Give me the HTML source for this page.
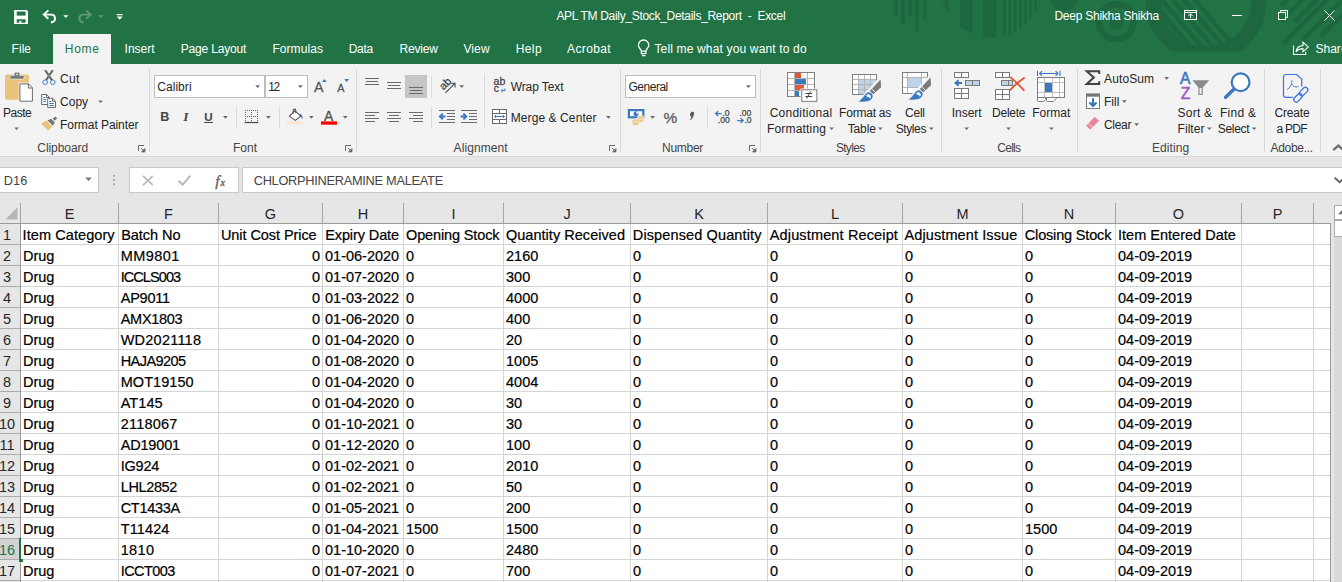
<!DOCTYPE html><html><head><meta charset="utf-8"><title>Excel</title><style>
*{box-sizing:border-box;margin:0;padding:0}
html,body{width:1342px;height:582px;overflow:hidden;background:#e6e6e6;font-family:"Liberation Sans",sans-serif;}
.a{position:absolute}
.t{position:absolute;white-space:pre;line-height:1;}
#title{left:0;top:0;width:1342px;height:64px;background:#217346}
.wt{color:#fff;font-size:12px}
#ribbon{left:0;top:63px;width:1342px;height:94px;background:#f3f3f3;border-bottom:1px solid #d2d2d2}
.rt{color:#262626;font-size:12px}
.gl{color:#444;font-size:12px}
.sep{position:absolute;width:1px;background:#d8d8d8;top:71px;height:82px}
#grid{left:0;top:203px;width:1342px;height:379px;}
.c{position:absolute;white-space:pre;font-size:14.5px;line-height:21px;color:#000;height:21px;-webkit-text-stroke:0.2px #000;}
.hc{position:absolute;white-space:pre;font-size:14.5px;line-height:20px;color:#262626;text-align:center;top:204px;height:20px}
.rn{position:absolute;white-space:pre;font-size:14.5px;line-height:21px;color:#262626;left:-3px;width:20px;text-align:center;}
</style></head><body><div id="root" class="a" style="left:0;top:0;width:1342px;height:582px;overflow:hidden">
<div id="title" class="a">
<svg class="a" style="left:0;top:0" width="1342" height="64">
<defs>
<clipPath id="cA"><circle cx="991.5" cy="-13" r="50.5"/></clipPath>
<clipPath id="cB"><circle cx="1206" cy="1.4" r="45.5"/></clipPath>
<clipPath id="cC"><rect x="1100" y="0" width="242" height="51.6"/></clipPath>
</defs>
<rect x="893.7" y="0" width="3.8" height="16.0" fill="#1d6640"/>
<rect x="901.0" y="0" width="4.0" height="23.5" fill="#1d6640"/>
<rect x="908.3" y="0" width="3.9" height="16.0" fill="#1d6640"/>
<rect x="915.0" y="0" width="4.0" height="32.0" fill="#1d6640"/>
<rect x="923.0" y="0" width="3.8" height="20.5" fill="#1d6640"/>
<g clip-path="url(#cA)" fill="#1d6640">
<rect x="940.0" y="0" width="8.5" height="40"/>
<rect x="959.7" y="0" width="12.8" height="40"/>
<rect x="982.8" y="0" width="13.7" height="40"/>
<rect x="1003.0" y="0" width="3.0" height="40"/>
<rect x="1008.5" y="0" width="2.7" height="40"/>
<rect x="1014.0" y="0" width="2.4" height="40"/>
<rect x="1019.1" y="0" width="2.4" height="40"/>
<rect x="1024.2" y="0" width="2.4" height="40"/>
<rect x="1029.3" y="0" width="2.4" height="40"/>
<rect x="1034.4" y="0" width="2.4" height="40"/>
<rect x="1039.5" y="0" width="2.4" height="40"/>
</g>
<circle cx="1064" cy="-3" r="13.8" fill="#1d6640"/>
<circle cx="1116.3" cy="21.6" r="17.4" fill="none" stroke="#1d6640" stroke-width="6.4"/>
<circle cx="1116.3" cy="23" r="7.2" fill="#1d6640"/>
<g clip-path="url(#cC)">
<circle cx="1206" cy="1.4" r="52.8" fill="none" stroke="#1d6640" stroke-width="15.4"/>
<g clip-path="url(#cB)" fill="#1d6640">
<path d="M1187.5 -5L1193.7 -5L1249.3 60L1243.1 60Z"/>
<path d="M1176.5 -5L1182.7 -5L1238.3 60L1232.1 60Z"/>
<path d="M1165.5 -5L1171.7 -5L1227.3 60L1221.1 60Z"/>
<path d="M1154.5 -5L1160.7 -5L1216.3 60L1210.1 60Z"/>
<path d="M1143.5 -5L1149.7 -5L1205.3 60L1199.1 60Z"/>
</g>
</g>
<g stroke="#1d6640" stroke-width="4.6" fill="none">
<path d="M1292.0 -5L1280.5 6.5"/>
<path d="M1307.0 -5L1281.0 21.0"/>
<path d="M1321.5 -5L1294.5 22.0"/>
<path d="M1332.0 -5L1283.0 44.0"/>
<path d="M1347.5 -5L1302.5 40.0"/>
<path d="M1362.0 -5L1321.0 36.0"/>
</g>
</svg>
</div>
<div class="a" style="left:53px;top:34px;width:58px;height:30px;background:#f3f3f3"></div>
<div class="t " style="left:556.40px;top:9.84px;font-size:12px;color:#fff;letter-spacing:-0.307px;">APL TM Daily_Stock_Details_Report  -  Excel</div>
<div class="t " style="left:1054.40px;top:9.84px;font-size:12px;color:#fff;letter-spacing:-0.238px;">Deep Shikha Shikha</div>
<div class="t " style="left:11.60px;top:42.84px;font-size:12px;color:#fff;letter-spacing:0.019px;">File</div>
<div class="t " style="left:64.80px;top:42.84px;font-size:12px;color:#217346;letter-spacing:0.695px;">Home</div>
<div class="t " style="left:124.60px;top:42.84px;font-size:12px;color:#fff;letter-spacing:-0.003px;">Insert</div>
<div class="t " style="left:180.80px;top:42.84px;font-size:12px;color:#fff;letter-spacing:-0.179px;">Page Layout</div>
<div class="t " style="left:272.40px;top:42.84px;font-size:12px;color:#fff;letter-spacing:0.069px;">Formulas</div>
<div class="t " style="left:348.80px;top:42.84px;font-size:12px;color:#fff;letter-spacing:-0.353px;">Data</div>
<div class="t " style="left:399.40px;top:42.84px;font-size:12px;color:#fff;letter-spacing:-0.172px;">Review</div>
<div class="t " style="left:463.40px;top:42.84px;font-size:12px;color:#fff;letter-spacing:0.134px;">View</div>
<div class="t " style="left:515.70px;top:42.84px;font-size:12px;color:#fff;letter-spacing:0.404px;">Help</div>
<div class="t " style="left:567.10px;top:42.84px;font-size:12px;color:#fff;letter-spacing:0.357px;">Acrobat</div>
<div class="t " style="left:654.40px;top:42.84px;font-size:12px;color:#fff;letter-spacing:0.159px;">Tell me what you want to do</div>
<div class="t " style="left:1315.40px;top:42.84px;font-size:12px;color:#fff;letter-spacing:0.042px;">Share</div>
<svg class="a" style="left:0;top:0" width="140" height="34" fill="none" stroke="#fff" stroke-width="1.3">
<!-- save -->
<path d="M14.100 10H26.600L28 11.400V24H14.100Z" fill="#fff" stroke="none"/>
<rect x="16.700" y="11.500" width="8.900" height="4.100" fill="#217346" stroke="none"/>
<rect x="16.700" y="19.300" width="8.900" height="3.400" fill="#217346" stroke="none"/>
<rect x="19.100" y="20.900" width="2.300" height="1.800" fill="#fff" stroke="none"/>
<!-- undo -->
<path d="M44 14.600H52A3.900 3.900 0 0 1 52 22.200H50.800" stroke-width="1.900"/>
<path d="M48.400 10.400L43.800 14.600L48.400 18.800" stroke-width="1.900"/>
<path d="M63.3 15.3H68.3L65.8 18Z" fill="#fff" stroke="none"/>
<!-- redo dim -->
<g stroke="#5e9a79"><path d="M90.400 14.600H82.400A3.900 3.900 0 0 0 82.400 22.200H83.600" stroke-width="1.900"/>
<path d="M86 10.400L90.600 14.600L86 18.800" stroke-width="1.900"/></g>
<path d="M98.3 15.3H103.3L100.8 18Z" fill="#5e9a79" stroke="none"/>
<!-- customize -->
<path d="M116.7 14.6H122.7" stroke-width="1.2"/>
<path d="M116.7 16.6H122.7L119.7 19.8Z" fill="#fff" stroke="none"/>
</svg>
<svg class="a" style="left:634px;top:37px" width="18" height="22" fill="none" stroke="#fff" stroke-width="1.300">
<path d="M7.400 14.200C7.400 12.400 4.400 11.200 4.400 8.200A5.200 5.200 0 0 1 14.800 8.200C14.800 11.200 11.800 12.400 11.800 14.200Z"/>
<path d="M7.400 14.200V16.600H11.800V14.200M7.900 18.600H11.300"/>
</svg>
<svg class="a" style="left:1170px;top:0" width="172" height="64" fill="none" stroke="#fff" stroke-width="1">
<rect x="14.5" y="10.5" width="12" height="9"/>
<path d="M14.5 12.5H26.5" />
<path d="M20.5 18V14M18.5 15.8L20.5 13.8L22.5 15.8"/>
<path d="M62 15.5H72"/>
<rect x="108.5" y="12.5" width="7" height="7"/>
<path d="M110.5 12.5V10.5H117.5V17.5H115.5"/>
<path d="M154.5 10.5L164.5 20.5M164.5 10.5L154.5 20.5"/>
<!-- share -->
<path d="M123.500 45.500V54.500H135.700V51.800" stroke-width="1.100"/>
<path d="M126 52C126.600 47.800 129.600 45.600 133 45.600V42.200L138.200 47L133 51.800V48.600C130 48.600 127.800 49.400 126 52Z" stroke-width="1.100"/>
</svg>
<div class="a" style="left:0;top:64px;width:1342px;height:92px;background:#f3f3f3"></div>
<div class="a" style="left:0;top:156px;width:1342px;height:1px;background:#d6d6d6"></div>
<div class="a" style="left:149px;top:69px;width:1px;height:83px;background:#d8d8d8"></div>
<div class="a" style="left:356px;top:69px;width:1px;height:83px;background:#d8d8d8"></div>
<div class="a" style="left:620px;top:69px;width:1px;height:83px;background:#d8d8d8"></div>
<div class="a" style="left:760px;top:69px;width:1px;height:83px;background:#d8d8d8"></div>
<div class="a" style="left:941px;top:69px;width:1px;height:83px;background:#d8d8d8"></div>
<div class="a" style="left:1077px;top:69px;width:1px;height:83px;background:#d8d8d8"></div>
<div class="a" style="left:1264px;top:69px;width:1px;height:83px;background:#d8d8d8"></div>
<div class="a" style="left:1320px;top:69px;width:1px;height:83px;background:#d8d8d8"></div>
<div class="a" style="left:154px;top:75px;width:111px;height:23px;background:#fff;border:1px solid #bcbcbc"></div>
<div class="a" style="left:265px;top:75px;width:43px;height:23px;background:#fff;border:1px solid #bcbcbc"></div>
<div class="a" style="left:625px;top:75px;width:131px;height:23px;background:#fff;border:1px solid #bcbcbc"></div>
<div class="a" style="left:405px;top:75px;width:22px;height:23px;background:#c6c6c6"></div>
<div class="t " style="left:3.10px;top:107.24px;font-size:12px;color:#262626;letter-spacing:-0.522px;">Paste</div>
<div class="t " style="left:60.00px;top:73.04px;font-size:12px;color:#262626;letter-spacing:0.356px;">Cut</div>
<div class="t " style="left:60.00px;top:96.34px;font-size:12px;color:#262626;letter-spacing:0.028px;">Copy</div>
<div class="t " style="left:60.00px;top:119.04px;font-size:12px;color:#262626;letter-spacing:-0.058px;">Format Painter</div>
<div class="t " style="left:37.30px;top:142.24px;font-size:12px;color:#444;letter-spacing:-0.072px;">Clipboard</div>
<div class="t " style="left:157.20px;top:80.74px;font-size:12px;color:#262626;letter-spacing:0.064px;">Calibri</div>
<div class="t " style="left:268.30px;top:80.74px;font-size:12px;color:#262626;letter-spacing:-1.359px;">12</div>
<div class="t " style="left:232.90px;top:142.24px;font-size:12px;color:#444;letter-spacing:0.095px;">Font</div>
<div class="t " style="left:510.70px;top:80.84px;font-size:12px;color:#262626;letter-spacing:-0.097px;">Wrap Text</div>
<div class="t " style="left:510.70px;top:112.34px;font-size:12px;color:#262626;letter-spacing:0.092px;">Merge &amp; Center</div>
<div class="t " style="left:453.60px;top:142.14px;font-size:12px;color:#444;letter-spacing:0.078px;">Alignment</div>
<div class="t " style="left:628.40px;top:80.74px;font-size:12px;color:#262626;letter-spacing:-0.467px;">General</div>
<div class="t " style="left:662.00px;top:142.24px;font-size:12px;color:#444;letter-spacing:-0.277px;">Number</div>
<div class="t " style="left:769.70px;top:107.24px;font-size:12px;color:#262626;letter-spacing:0.235px;">Conditional</div>
<div class="t " style="left:766.90px;top:123.24px;font-size:12px;color:#262626;letter-spacing:0.193px;">Formatting</div>
<div class="t " style="left:839.10px;top:107.24px;font-size:12px;color:#262626;letter-spacing:-0.227px;">Format as</div>
<div class="t " style="left:847.70px;top:123.24px;font-size:12px;color:#262626;letter-spacing:-0.122px;">Table</div>
<div class="t " style="left:905.00px;top:107.24px;font-size:12px;color:#262626;letter-spacing:-0.224px;">Cell</div>
<div class="t " style="left:895.70px;top:123.24px;font-size:12px;color:#262626;letter-spacing:-0.398px;">Styles</div>
<div class="t " style="left:835.90px;top:142.24px;font-size:12px;color:#444;letter-spacing:-0.677px;">Styles</div>
<div class="t " style="left:951.70px;top:107.24px;font-size:12px;color:#262626;letter-spacing:-0.023px;">Insert</div>
<div class="t " style="left:992.10px;top:107.24px;font-size:12px;color:#262626;letter-spacing:-0.257px;">Delete</div>
<div class="t " style="left:1032.20px;top:107.24px;font-size:12px;color:#262626;letter-spacing:0.037px;">Format</div>
<div class="t " style="left:997.20px;top:142.24px;font-size:12px;color:#444;letter-spacing:-0.693px;">Cells</div>
<div class="t " style="left:1104.00px;top:73.24px;font-size:12px;color:#262626;letter-spacing:0.123px;">AutoSum</div>
<div class="t " style="left:1104.00px;top:96.44px;font-size:12px;color:#262626;letter-spacing:-0.009px;">Fill</div>
<div class="t " style="left:1104.00px;top:119.34px;font-size:12px;color:#262626;letter-spacing:-0.322px;">Clear</div>
<div class="t " style="left:1177.60px;top:107.24px;font-size:12px;color:#262626;letter-spacing:0.208px;">Sort &amp;</div>
<div class="t " style="left:1177.60px;top:123.34px;font-size:12px;color:#262626;letter-spacing:0.026px;">Filter</div>
<div class="t " style="left:1219.90px;top:107.24px;font-size:12px;color:#262626;letter-spacing:0.303px;">Find &amp;</div>
<div class="t " style="left:1217.70px;top:123.34px;font-size:12px;color:#262626;letter-spacing:-0.292px;">Select</div>
<div class="t " style="left:1151.90px;top:142.14px;font-size:12px;color:#444;letter-spacing:0.116px;">Editing</div>
<div class="t " style="left:1274.60px;top:107.24px;font-size:12px;color:#262626;letter-spacing:-0.206px;">Create</div>
<div class="t " style="left:1276.60px;top:123.34px;font-size:12px;color:#262626;letter-spacing:-0.754px;">a PDF</div>
<div class="t " style="left:1270.60px;top:142.14px;font-size:12px;color:#444;letter-spacing:-0.329px;">Adobe...</div>
<svg class="a" style="left:0;top:64px" width="1342" height="94" viewBox="0 64 1342 94">
<!-- ===== dropdown arrows (small triangles) ===== -->
<g fill="#6a6a6a">
<path d="M14.3 127.4H19L16.65 130Z"/>
<path d="M98.2 100.4H102.9L100.55 103Z"/>
<path d="M255.2 85.3H260L257.6 88Z"/>
<path d="M298 85.3H302.8L300.4 88Z"/>
<path d="M223 116H227.8L225.4 118.7Z"/>
<path d="M266 116H270.8L268.4 118.7Z"/>
<path d="M309 116H313.8L311.4 118.7Z"/>
<path d="M342.8 116H347.6L345.2 118.7Z"/>
<path d="M459.3 85.2H464.1L461.7 87.9Z"/>
<path d="M606 116H610.8L608.4 118.7Z"/>
<path d="M746 85.3H750.8L748.4 88Z"/>
<path d="M650.2 116H655L652.6 118.7Z"/>
<path d="M829.3 127.4H834L831.65 130Z"/>
<path d="M878 127.4H882.7L880.35 130Z"/>
<path d="M929 127.4H933.7L931.35 130Z"/>
<path d="M964.3 127.4H969L966.65 130Z"/>
<path d="M1006.2 127.4H1010.9L1008.55 130Z"/>
<path d="M1049.1 127.4H1053.8L1051.45 130Z"/>
<path d="M1164.2 77H1169L1166.6 79.7Z"/>
<path d="M1122 100.3H1126.8L1124.4 103Z"/>
<path d="M1134.2 123.2H1139L1136.6 125.9Z"/>
<path d="M1206.9 127.4H1211.6L1209.25 130Z"/>
<path d="M1251.8 127.4H1256.5L1254.15 130Z"/>
</g>
<!-- ===== dialog launchers ===== -->
<g fill="none" stroke="#6a6a6a" stroke-width="1">
<path id="lch" d="M138.5 151V145.5H144"/>
<path d="M345.5 151V145.5H351"/>
<path d="M609.5 151V145.5H615"/>
<path d="M749.5 151V145.5H755"/>
</g>
<g fill="#6a6a6a">
<path d="M141 148L144.6 151.6M144.9 148.6V151.9H141.6Z" stroke="#6a6a6a" stroke-width="1"/>
<path d="M348 148L351.6 151.6M351.9 148.6V151.9H348.6Z" stroke="#6a6a6a" stroke-width="1"/>
<path d="M612 148L615.6 151.6M615.9 148.6V151.9H612.6Z" stroke="#6a6a6a" stroke-width="1"/>
<path d="M752 148L755.6 151.6M755.9 148.6V151.9H752.6Z" stroke="#6a6a6a" stroke-width="1"/>
</g>
<!-- ===== Paste ===== -->
<rect x="5" y="74.600" width="24" height="25.200" rx="1.600" fill="#eac37a"/>
<path d="M10 79V75.600H14.200V73.600A1.400 1.400 0 0 1 15.600 72.200H18.400A1.400 1.400 0 0 1 19.800 73.600V75.600H24V79Z" fill="#777" stroke="#f3f3f3" stroke-width=".6"/>
<circle cx="17" cy="74.600" r="1" fill="#d8d8d8"/>
<path d="M19.900 83.900H28.600L32.400 87.700V101.200H19.900Z" fill="#fff" stroke="#f3f3f3" stroke-width="2.600"/>
<path d="M19.900 83.900H28.600L32.400 87.700V101.200H19.900Z" fill="#fff" stroke="#6a6a6a" stroke-width="1"/>
<path d="M28.400 84V88H32.300" fill="none" stroke="#6a6a6a" stroke-width="1"/>
<!-- ===== Cut ===== -->
<path d="M44.600 70.600L46.200 70.200L52.600 79.800L51.200 80.400ZM53.400 70.600L51.800 70.200L45.400 79.800L46.800 80.400Z" fill="#5f5f5f" stroke="#5f5f5f" stroke-width=".5"/>
<circle cx="45.200" cy="82.200" r="2.300" fill="#f3f3f3" stroke="#4281c4" stroke-width="1"/>
<circle cx="52.800" cy="82.200" r="2.300" fill="#f3f3f3" stroke="#4281c4" stroke-width="1"/>
<!-- ===== Copy ===== -->
<g fill="#fff" stroke="#6a6a6a" stroke-width="1">
<path d="M41.7 94.5H46.6L49.5 97.4V104.5H41.7Z"/>
<path d="M46.5 94.6V97.5H49.4" fill="none"/>
<path d="M47.7 98.3H52.6L55.5 101.2V107.5H47.7Z"/>
<path d="M52.5 98.4V101.3H55.4" fill="none"/>
</g>
<g stroke="#3b78be" stroke-width="1" fill="none">
<path d="M43.3 97.5H45.4M43.3 99.5H46M43.3 101.5H46"/>
<path d="M49.3 101.5H51.4M49.3 103.5H54M49.3 105.5H54"/>
</g>
<!-- ===== Format painter ===== -->
<path d="M40.900 123.500L46.300 120.700L52.300 126.700L48.100 130.600Z" fill="#eac37a"/>
<path d="M47.500 120.500L51.100 118.700L54.900 122.500L52.900 125.700Z" fill="#777"/>
<path d="M52.700 118.700L55.500 116.600L57.200 118.500L54.700 120.800Z" fill="#777"/>
<!-- ===== Font group ===== -->
<!-- Grow/shrink A drawn as text -->
<text x="314" y="92" font-family="Liberation Sans" font-size="14.2" fill="#555" stroke="#555" stroke-width=".3">A</text>
<path d="M322 82L324.4 78.9L326.8 82Z" fill="#3b78be"/>
<text x="337.2" y="92" font-family="Liberation Sans" font-size="10.8" fill="#555" stroke="#555" stroke-width=".3">A</text>
<path d="M344.3 78.9H349.1L346.7 82Z" fill="#3b78be"/>
<text x="160.3" y="121" font-family="Liberation Sans" font-weight="bold" font-size="12.6" fill="#444">B</text>
<text x="183.2" y="121" font-family="Liberation Serif" font-style="italic" font-weight="bold" font-size="13.4" fill="#444">I</text>
<text x="204.2" y="120.6" font-family="Liberation Sans" font-weight="bold" font-size="11.6" fill="#444">U</text>
<path d="M204.2 122.5H213" stroke="#444" stroke-width="1"/>
<path d="M236.5 107V128M279.5 107V128" stroke="#dadada" stroke-width="1"/>
<!-- borders icon -->
<g stroke="#6a6a6a" stroke-width="1" fill="none">
<path d="M245 110.5H258M245 116.5H258M245.5 110V122M251.5 110V122M257.5 110V122" stroke-dasharray="1 1"/>
<path d="M244.6 122.5H258.4" stroke="#444" stroke-width="1.2"/>
</g>
<!-- fill bucket -->
<path d="M299.600 113.400C302 114.200 303.200 116.600 302.400 119.600C301.800 117.600 300.800 116.600 299.400 116.200Z" fill="#3b78be"/>
<path d="M289.400 116.400L294.800 110.800L300.800 115.800L295.400 120.400Z" fill="#fff" stroke="#555" stroke-width="1.100" stroke-linejoin="round"/>
<path d="M293.200 113.800V110.400A1.300 1.300 0 0 1 295.800 110.400V113" fill="none" stroke="#555" stroke-width="1.100"/>
<rect x="287" y="121.400" width="16" height="3.300" fill="#fbe5d6"/>
<!-- font colour -->
<text x="324.100" y="120.600" font-family="Liberation Sans" font-size="14" fill="#555" stroke="#555" stroke-width=".35">A</text>
<rect x="321" y="121.400" width="16" height="3.300" fill="#f00"/>
<!-- ===== Alignment group ===== -->
<g stroke="#6a6a6a" stroke-width="1" fill="none">
<!-- top align -->
<path d="M365 78.5H379M366 81.5H378M365 84.5H379"/>
<!-- middle align -->
<path d="M387 82.5H401M388 85.5H400M387 88.5H401"/>
<!-- bottom align -->
<path d="M409 87.5H423M410 90.5H422M409 93.5H423"/>
<!-- left -->
<path d="M365 112.5H379M365 115.5H375M365 118.5H379M365 121.5H375"/>
<!-- center -->
<path d="M387 112.5H401M389 115.5H399M387 118.5H401M389 121.5H399"/>
<!-- right -->
<path d="M409 112.5H423M413 115.5H423M409 118.5H423M413 121.5H423"/>
<!-- indent lines -->
<path d="M439 110.5H455M447 113.5H455M447 116.5H455M447 119.5H455M439 122.5H455"/>
<path d="M461 110.5H477M469 113.5H477M469 116.5H477M469 119.5H477M461 122.5H477"/>
</g>
<path d="M431.5 76V97.5M431.5 107.5V128M484.5 74V128.5M707.5 107V128" stroke="#dadada" stroke-width="1"/>
<!-- indent arrows -->
<g stroke="#3b78be" stroke-width="1.9" fill="none">
<path d="M445.5 116.5H440.200M442.800 113.600L439.900 116.5L442.800 119.400"/>
<path d="M460.6 116.5H466M463.400 113.600L466.300 116.5L463.400 119.400"/>
</g>
<!-- orientation -->
<text transform="translate(443.4 90.6) rotate(-45)" font-family="Liberation Sans" font-size="10.8" fill="#4a4a4a" stroke="#4a4a4a" stroke-width=".3">ab</text>
<path d="M445.4 92.800L454.400 83.800M455 87.600V83.200H450.600" stroke="#4a4a4a" stroke-width="1.100" fill="none"/>
<!-- wrap text -->
<text x="493.6" y="85.400" font-family="Liberation Sans" font-size="10.600" fill="#4a4a4a" stroke="#4a4a4a" stroke-width=".3">ab</text>
<text x="493.8" y="92.400" font-family="Liberation Sans" font-size="10.600" fill="#4a4a4a" stroke="#4a4a4a" stroke-width=".3">c</text>
<path d="M505 88.400V90.600H501.400M502.800 89.200L501.200 90.600L502.800 92.100" stroke="#3b78be" stroke-width="1" fill="none"/>
<!-- merge & center -->
<g stroke="#6a6a6a" stroke-width="1" fill="#fff">
<rect x="492.5" y="109.5" width="14" height="14"/>
<path d="M492.5 113.5H506.5M492.5 119.5H506.5M499.5 109.5V113.5M499.5 119.5V123.5" fill="none"/>
</g>
<path d="M494.6 116.5H504.4M496.2 115L494.6 116.5L496.2 118M502.8 115L504.4 116.5L502.8 118" stroke="#3b78be" stroke-width="1" fill="none"/>
<!-- ===== Number group ===== -->
<!-- accounting -->
<rect x="628.900" y="110.100" width="14.400" height="7.200" fill="#fff" stroke="#3b78be" stroke-width="2.200"/>
<circle cx="636" cy="113.800" r="2.500" fill="#3b78be"/>
<circle cx="637.200" cy="112.800" r="1" fill="#fff"/>
<g fill="#eac37a">
<ellipse cx="640.6" cy="116.8" rx="3.6" ry="1.3" stroke="#f3f3f3" stroke-width=".6"/>
<ellipse cx="640.6" cy="118.8" rx="3.6" ry="1.3" stroke="#f3f3f3" stroke-width=".6"/>
<ellipse cx="640.6" cy="120.8" rx="3.6" ry="1.3" stroke="#f3f3f3" stroke-width=".6"/>
<ellipse cx="635.6" cy="120.4" rx="3.6" ry="1.3" stroke="#f3f3f3" stroke-width=".6"/>
<ellipse cx="635.6" cy="122.4" rx="3.6" ry="1.3" stroke="#f3f3f3" stroke-width=".6"/>
<ellipse cx="635.6" cy="124" rx="3.6" ry="1.3" stroke="#f3f3f3" stroke-width=".6"/>
</g>
<text x="663.600" y="123" font-family="Liberation Sans" font-size="15.400" fill="#555" stroke="#555" stroke-width=".25">%</text>
<path d="M690.4 113.6A1.9 1.9 0 1 1 693.6 115C693.6 117.6 692 119.4 689.6 120.2C691 118.8 691.4 117.6 691.2 116.6A1.9 1.9 0 0 1 690.4 113.6Z" fill="#5a5a5a"/>
<!-- inc/dec decimal -->
<g font-family="Liberation Sans" font-size="8.6" fill="#444" stroke="#444" stroke-width=".25">
<text x="722.4" y="116.4">.0</text>
<text x="717.8" y="123.4">.00</text>
<text x="739.4" y="116.4">.00</text>
<text x="744.4" y="123.4">.0</text>
</g>
<g stroke="#3b78be" stroke-width="1.3" fill="none">
<path d="M721.6 113.6H715.6M718.2 111.2L715.6 113.6L718.2 116"/>
<path d="M737.2 120.6H743.2M740.6 118.2L743.2 120.6L740.6 123"/>
</g>
<!-- ===== Styles group ===== -->
<!-- conditional formatting -->
<g>
<rect x="787.500" y="72.500" width="27" height="24" fill="#fff" stroke="#7f7f7f" stroke-width="1"/>
<path d="M788 78.500H814M788 84.500H814M788 90.500H814M794.500 73V96M807.500 73V96" stroke="#b4b4b4" stroke-width="1" fill="none"/>
<rect x="795" y="73" width="6" height="5" fill="#dc5939"/>
<rect x="795" y="79" width="11" height="5" fill="#3b78be"/>
<rect x="795" y="85" width="9" height="5" fill="#dc5939"/>
<rect x="795" y="91" width="4" height="5" fill="#3b78be"/>
<rect x="800.500" y="88.500" width="17" height="14" fill="#f3f3f3"/>
<rect x="801.800" y="89.800" width="15" height="11.600" fill="#fff" stroke="#7f7f7f" stroke-width="1"/>
<path d="M805.400 93.500H812.200M805.400 96.500H812.200M810.600 91.400L806.600 98.600" stroke="#444" stroke-width="1" fill="none"/>
</g>
<!-- format as table -->
<g>
<rect x="852.5" y="74.5" width="24" height="20" fill="#fff" stroke="#7f7f7f" stroke-width="1"/>
<rect x="858.5" y="79.5" width="18" height="15" fill="#bdd3ea"/>
<path d="M853 79.500H876M853 84.500H876M853 89.500H876M858.500 75V94M864.500 75V94M870.500 75V94" stroke="#b4b4b4" stroke-width="1" fill="none"/>
<rect x="852.5" y="74.5" width="24" height="20" fill="none" stroke="#7f7f7f" stroke-width="1"/>
<g transform="translate(0.0 0.0)">
<path d="M878.500 78.300V96.500H861.700Z" fill="#f3f3f3"/>
<path d="M869.800 90.900L880.600 79.600L881.100 87.200L873.300 94.300Z" fill="#7a7a7a"/>
<path d="M871.500 88.400L875.700 92.600" stroke="#f3f3f3" stroke-width="1"/>
<path d="M858.400 101.600C862.500 99 864 95.400 865.800 93.900A3.500 3.500 0 0 1 871.800 98.400C870.400 100.800 867 101.900 858.400 101.600Z" fill="#3b78be"/>
<path d="M866.200 95.400C867.400 93.800 869.800 94 870.600 95.800C871 97 870.600 98.200 869.800 98.800L868.800 96.800L867.600 97.200Z" fill="#fff"/>
</g>
</g>
<!-- cell styles -->
<g>
<rect x="902.5" y="72.5" width="25" height="21" fill="#fff" stroke="#7f7f7f" stroke-width="1"/>
<rect x="908" y="78" width="13" height="9" fill="#bdd3ea"/>
<path d="M903 77.500H927M903 87.500H927M907.500 73V93M921.500 73V93" stroke="#b4b4b4" stroke-width="1" fill="none"/>
<g transform="translate(50.0 -2.0)">
<path d="M878.500 78.300V96.500H861.700Z" fill="#f3f3f3"/>
<path d="M869.800 90.900L880.600 79.600L881.100 87.200L873.300 94.300Z" fill="#7a7a7a"/>
<path d="M871.500 88.400L875.700 92.600" stroke="#f3f3f3" stroke-width="1"/>
<path d="M858.400 101.600C862.500 99 864 95.400 865.800 93.900A3.500 3.500 0 0 1 871.800 98.400C870.400 100.800 867 101.900 858.400 101.600Z" fill="#3b78be"/>
<path d="M866.200 95.400C867.400 93.800 869.800 94 870.600 95.800C871 97 870.600 98.200 869.800 98.800L868.800 96.800L867.600 97.200Z" fill="#fff"/>
</g>
</g>
<!-- ===== Cells group ===== -->
<!-- insert -->
<g stroke="#7a7a7a" stroke-width="1" fill="#fff">
<rect x="954.5" y="72.5" width="14" height="5"/><path d="M961.5 72.5V77.5" fill="none"/>
<rect x="965.5" y="80.500" width="14" height="5" fill="#bdd3ea"/><path d="M972.5 80.5V85.5" fill="none"/>
<rect x="954.5" y="88.500" width="14" height="10"/><path d="M961.5 88.5V98.5M954.5 93.5H968.5" fill="none"/>
</g>
<path d="M962 83H956M958.600 80.300L955.600 83L958.600 85.700" stroke="#3b78be" stroke-width="2" fill="none"/>
<!-- delete -->
<g stroke="#7a7a7a" stroke-width="1" fill="#fff">
<rect x="995.5" y="72.5" width="14" height="5"/><path d="M1002.5 72.5V77.5" fill="none"/>
<rect x="1001.5" y="80.500" width="11" height="5" fill="#bdd3ea"/><path d="M1008.5 80.5V85.5" fill="none"/>
<rect x="995.5" y="89.500" width="14" height="10"/><path d="M1002.5 89.5V99.5M995.5 94.5H1009.5" fill="none"/>
</g>
<path d="M1010.600 77.6C1015 81 1020 86 1023.800 90.2M1024 78C1019 81.6 1014 85.600 1010.400 89.800" stroke="#dc5939" stroke-width="1.9" fill="none" stroke-linecap="round"/>
<!-- format -->
<g>
<path d="M1037.500 97.500V100.300Q1037.500 101.500 1038.700 101.500H1043.400L1045.600 99.300V97.500M1046.500 97.500V100.300Q1046.500 101.500 1047.700 101.500H1053.400L1056.400 98.300V97.500" fill="#fff" stroke="#7f7f7f" stroke-width="1"/>
<rect x="1037.500" y="77.500" width="27" height="20" fill="#fff" stroke="#7f7f7f" stroke-width="1"/>
<path d="M1038 82.500H1064M1038 92.500H1064M1044.500 78V97M1052.500 78V97M1059.500 78V97" stroke="#c0c0c0" stroke-width="1" fill="none"/>
<rect x="1045" y="83" width="7" height="9" fill="#3b78be"/>
<path d="M1037.500 70.800V76M1060 70.800V76M1039.600 73.500H1058M1042 71.200L1039.600 73.500L1042 75.800M1055.600 71.200L1058 73.500L1055.600 75.800" stroke="#3b78be" stroke-width="1.100" fill="none"/>
</g>
<!-- ===== Editing group ===== -->
<path d="M1099.200 74V71.200H1086.800L1093.800 77.600L1086.800 84H1099.200V81.200" stroke="#444" stroke-width="2.100" fill="none" stroke-linejoin="miter"/>
<!-- fill -->
<rect x="1086.500" y="94.500" width="13" height="14" fill="#fff" stroke="#7a7a7a" stroke-width="1"/>
<rect x="1086" y="93.400" width="14" height="3.300" fill="#777"/>
<path d="M1093 98.200V105.800M1089.400 102.400L1093 106L1096.600 102.400" stroke="#3474ba" stroke-width="2.100" fill="none"/>
<!-- eraser -->
<path d="M1086.600 125.800L1094.600 117.300L1098.700 120.700L1090.300 129.200Z" fill="#e8879c" stroke="#e8879c" stroke-width=".8" stroke-linejoin="round"/>
<path d="M1088.200 123.400L1092.600 127.400" stroke="#f3f3f3" stroke-width=".9"/>
<!-- sort & filter -->
<text x="1180" y="84.400" font-family="Liberation Sans" font-size="15.600" fill="#3b78be" stroke="#3b78be" stroke-width=".55">A</text>
<text x="1180.800" y="98.800" font-family="Liberation Sans" font-size="15.600" fill="#a25dbb" stroke="#a25dbb" stroke-width=".55">Z</text>
<path d="M1192.400 80.200H1209.200L1202.800 87.400V95H1198.400V87.400Z" fill="#8a8a8a"/>
<rect x="1199.600" y="88" width="2" height="5.800" fill="#f3f3f3"/>
<!-- find -->
<path d="M1233.600 89.600L1225.600 97.200" stroke="#3b78be" stroke-width="3.500" stroke-linecap="round"/>
<circle cx="1240.600" cy="82.200" r="8.900" fill="#fff" stroke="#3b78be" stroke-width="2.200"/>
<!-- create pdf -->
<g fill="none" stroke="#3f6fe0" stroke-width="1.200">
<path d="M1292.700 97.300H1285.700A2.200 2.200 0 0 1 1283.500 95.100V76.700A2.200 2.200 0 0 1 1285.700 74.500H1296.700L1301.700 79V86.600"/>
<path d="M1287 89.600C1290 88 1292 84.600 1292 80.200M1292 84C1292.600 86 1295 87.800 1298.400 86.600" stroke-width=".9"/>
<g stroke-width="1.300">
<rect x="-5" y="-2.500" width="10" height="5" rx="2.500" transform="translate(1298 97.800) rotate(-45)"/>
<rect x="-5" y="-2.500" width="10" height="5" rx="2.500" transform="translate(1303.600 91.600) rotate(-45)"/>
</g>
</g>
<!-- collapse caret -->
<path d="M1333.200 150.200L1338.400 145.600L1343.600 150.200" stroke="#707070" stroke-width="2.400" fill="none"/>
</svg>

<div class="a" style="left:-1px;top:167px;width:100px;height:26px;background:#fff;border:1px solid #c8c8c8"></div>
<div class="a" style="left:129px;top:167px;width:110px;height:26px;background:#fff;border:1px solid #c8c8c8"></div>
<div class="a" style="left:242px;top:167px;width:1102px;height:26px;background:#fff;border:1px solid #c8c8c8"></div>
<div class="t " style="left:3.70px;top:175.06px;font-size:12.8px;color:#444;letter-spacing:0.058px;">D16</div>
<div class="t " style="left:253.70px;top:175.06px;font-size:12.8px;color:#444;letter-spacing:-0.283px;">CHLORPHINERAMINE MALEATE</div>
<svg class="a" style="left:0;top:160px" width="1342" height="40" viewBox="0 160 1342 40">
<path d="M85.300 177.400H91.700L88.500 181.200Z" fill="#777"/>
<g fill="#a2a2a2"><rect x="113.100" y="175" width="1.800" height="1.800"/><rect x="113.100" y="179.200" width="1.800" height="1.800"/><rect x="113.100" y="183.400" width="1.800" height="1.800"/></g>
<path d="M143 175.800L152.800 185.200M152.800 175.800L143 185.200" stroke="#bcbcbc" stroke-width="1.800" fill="none"/>
<path d="M178.600 180.800L182.600 184.800L190.400 175.600" stroke="#bcbcbc" stroke-width="2.100" fill="none"/>
<text x="215.200" y="185.600" font-family="Liberation Serif" font-style="italic" font-size="15.500" fill="#5f5f5f" stroke="#5f5f5f" stroke-width=".35">f</text>
<text x="220.400" y="186" font-family="Liberation Serif" font-style="italic" font-size="10" fill="#5f5f5f" stroke="#5f5f5f" stroke-width=".35">x</text>
<path d="M1334.600 177.600L1339.600 182.200L1344.600 177.600" stroke="#5f5f5f" stroke-width="1.900" fill="none"/>
</svg>
<div class="a" style="left:21px;top:224px;width:1310px;height:358px;background:#fff"></div>
<div class="a" style="left:20px;top:203px;width:1px;height:21px;background:#a6a6a6"></div>
<div class="a" style="left:118px;top:203px;width:1px;height:21px;background:#a6a6a6"></div>
<div class="a" style="left:218px;top:203px;width:1px;height:21px;background:#a6a6a6"></div>
<div class="a" style="left:322px;top:203px;width:1px;height:21px;background:#a6a6a6"></div>
<div class="a" style="left:403px;top:203px;width:1px;height:21px;background:#a6a6a6"></div>
<div class="a" style="left:503px;top:203px;width:1px;height:21px;background:#a6a6a6"></div>
<div class="a" style="left:630px;top:203px;width:1px;height:21px;background:#a6a6a6"></div>
<div class="a" style="left:767px;top:203px;width:1px;height:21px;background:#a6a6a6"></div>
<div class="a" style="left:902px;top:203px;width:1px;height:21px;background:#a6a6a6"></div>
<div class="a" style="left:1022px;top:203px;width:1px;height:21px;background:#a6a6a6"></div>
<div class="a" style="left:1115px;top:203px;width:1px;height:21px;background:#a6a6a6"></div>
<div class="a" style="left:1241px;top:203px;width:1px;height:21px;background:#a6a6a6"></div>
<div class="a" style="left:1313px;top:203px;width:1px;height:21px;background:#a6a6a6"></div>
<div class="a" style="left:0;top:223px;width:1331px;height:1px;background:#9b9b9b"></div>
<svg class="a" style="left:5px;top:207px" width="13" height="13"><path d="M12.4 0.4V12.4H0.4Z" fill="#b5b5b5"/></svg>
<div class="hc" style="left:21px;width:97px">E</div>
<div class="hc" style="left:119px;width:99px">F</div>
<div class="hc" style="left:219px;width:103px">G</div>
<div class="hc" style="left:323px;width:80px">H</div>
<div class="hc" style="left:404px;width:99px">I</div>
<div class="hc" style="left:504px;width:126px">J</div>
<div class="hc" style="left:631px;width:136px">K</div>
<div class="hc" style="left:768px;width:134px">L</div>
<div class="hc" style="left:903px;width:119px">M</div>
<div class="hc" style="left:1023px;width:92px">N</div>
<div class="hc" style="left:1116px;width:125px">O</div>
<div class="hc" style="left:1242px;width:71px">P</div>
<div class="a" style="left:0;top:244px;width:1331px;height:1px;background:#d4d4d4"></div>
<div class="a" style="left:0;top:265px;width:1331px;height:1px;background:#d4d4d4"></div>
<div class="a" style="left:0;top:286px;width:1331px;height:1px;background:#d4d4d4"></div>
<div class="a" style="left:0;top:307px;width:1331px;height:1px;background:#d4d4d4"></div>
<div class="a" style="left:0;top:328px;width:1331px;height:1px;background:#d4d4d4"></div>
<div class="a" style="left:0;top:349px;width:1331px;height:1px;background:#d4d4d4"></div>
<div class="a" style="left:0;top:370px;width:1331px;height:1px;background:#d4d4d4"></div>
<div class="a" style="left:0;top:391px;width:1331px;height:1px;background:#d4d4d4"></div>
<div class="a" style="left:0;top:412px;width:1331px;height:1px;background:#d4d4d4"></div>
<div class="a" style="left:0;top:433px;width:1331px;height:1px;background:#d4d4d4"></div>
<div class="a" style="left:0;top:454px;width:1331px;height:1px;background:#d4d4d4"></div>
<div class="a" style="left:0;top:475px;width:1331px;height:1px;background:#d4d4d4"></div>
<div class="a" style="left:0;top:496px;width:1331px;height:1px;background:#d4d4d4"></div>
<div class="a" style="left:0;top:517px;width:1331px;height:1px;background:#d4d4d4"></div>
<div class="a" style="left:0;top:538px;width:1331px;height:1px;background:#d4d4d4"></div>
<div class="a" style="left:0;top:559px;width:1331px;height:1px;background:#d4d4d4"></div>
<div class="a" style="left:0;top:580px;width:1331px;height:1px;background:#d4d4d4"></div>
<div class="a" style="left:20px;top:224px;width:1px;height:358px;background:#d4d4d4"></div>
<div class="a" style="left:118px;top:224px;width:1px;height:358px;background:#d4d4d4"></div>
<div class="a" style="left:218px;top:224px;width:1px;height:358px;background:#d4d4d4"></div>
<div class="a" style="left:322px;top:224px;width:1px;height:358px;background:#d4d4d4"></div>
<div class="a" style="left:403px;top:224px;width:1px;height:358px;background:#d4d4d4"></div>
<div class="a" style="left:503px;top:224px;width:1px;height:358px;background:#d4d4d4"></div>
<div class="a" style="left:630px;top:224px;width:1px;height:358px;background:#d4d4d4"></div>
<div class="a" style="left:767px;top:224px;width:1px;height:358px;background:#d4d4d4"></div>
<div class="a" style="left:902px;top:224px;width:1px;height:358px;background:#d4d4d4"></div>
<div class="a" style="left:1022px;top:224px;width:1px;height:358px;background:#d4d4d4"></div>
<div class="a" style="left:1115px;top:224px;width:1px;height:358px;background:#d4d4d4"></div>
<div class="a" style="left:1241px;top:224px;width:1px;height:358px;background:#d4d4d4"></div>
<div class="a" style="left:1313px;top:224px;width:1px;height:358px;background:#d4d4d4"></div>
<div class="a" style="left:1330px;top:223px;width:1px;height:359px;background:#9b9b9b"></div>
<div class="a" style="left:0;top:224px;width:20px;height:358px;background:#e6e6e6"></div>
<div class="a" style="left:0;top:244px;width:20px;height:1px;background:#ababab"></div>
<div class="a" style="left:0;top:265px;width:20px;height:1px;background:#ababab"></div>
<div class="a" style="left:0;top:286px;width:20px;height:1px;background:#ababab"></div>
<div class="a" style="left:0;top:307px;width:20px;height:1px;background:#ababab"></div>
<div class="a" style="left:0;top:328px;width:20px;height:1px;background:#ababab"></div>
<div class="a" style="left:0;top:349px;width:20px;height:1px;background:#ababab"></div>
<div class="a" style="left:0;top:370px;width:20px;height:1px;background:#ababab"></div>
<div class="a" style="left:0;top:391px;width:20px;height:1px;background:#ababab"></div>
<div class="a" style="left:0;top:412px;width:20px;height:1px;background:#ababab"></div>
<div class="a" style="left:0;top:433px;width:20px;height:1px;background:#ababab"></div>
<div class="a" style="left:0;top:454px;width:20px;height:1px;background:#ababab"></div>
<div class="a" style="left:0;top:475px;width:20px;height:1px;background:#ababab"></div>
<div class="a" style="left:0;top:496px;width:20px;height:1px;background:#ababab"></div>
<div class="a" style="left:0;top:517px;width:20px;height:1px;background:#ababab"></div>
<div class="a" style="left:0;top:538px;width:20px;height:1px;background:#ababab"></div>
<div class="a" style="left:0;top:559px;width:20px;height:1px;background:#ababab"></div>
<div class="a" style="left:0;top:580px;width:20px;height:1px;background:#ababab"></div>
<div class="a" style="left:20px;top:224px;width:1px;height:358px;background:#9b9b9b"></div>
<div class="a" style="left:0;top:539px;width:20px;height:20px;background:#d2d2d2"></div>
<div class="rn" style="top:225px;color:#262626">1</div>
<div class="rn" style="top:246px;color:#262626">2</div>
<div class="rn" style="top:267px;color:#262626">3</div>
<div class="rn" style="top:288px;color:#262626">4</div>
<div class="rn" style="top:309px;color:#262626">5</div>
<div class="rn" style="top:330px;color:#262626">6</div>
<div class="rn" style="top:351px;color:#262626">7</div>
<div class="rn" style="top:372px;color:#262626">8</div>
<div class="rn" style="top:393px;color:#262626">9</div>
<div class="rn" style="top:414px;color:#262626">10</div>
<div class="rn" style="top:435px;color:#262626">11</div>
<div class="rn" style="top:456px;color:#262626">12</div>
<div class="rn" style="top:477px;color:#262626">13</div>
<div class="rn" style="top:498px;color:#262626">14</div>
<div class="rn" style="top:519px;color:#262626">15</div>
<div class="rn" style="top:540px;color:#217346">16</div>
<div class="rn" style="top:561px;color:#262626">17</div>
<div class="a" style="left:19px;top:538px;width:2px;height:24px;background:#217346"></div>
<div class="a" style="left:21px;top:559px;width:2px;height:3px;background:#217346"></div>
<div class="c" style="left:22.6px;top:225px;letter-spacing:0.077px">Item Category</div>
<div class="c" style="left:121.2px;top:225px;letter-spacing:-0.051px">Batch No</div>
<div class="c" style="left:220.9px;top:225px;letter-spacing:-0.065px">Unit Cost Price</div>
<div class="c" style="left:325.2px;top:225px;letter-spacing:-0.105px">Expiry Date</div>
<div class="c" style="left:406.0px;top:225px;letter-spacing:-0.135px">Opening Stock</div>
<div class="c" style="left:505.9px;top:225px;letter-spacing:0.038px">Quantity Received</div>
<div class="c" style="left:632.8px;top:225px;letter-spacing:0.121px">Dispensed Quantity</div>
<div class="c" style="left:769.8px;top:225px;letter-spacing:0.139px">Adjustment Receipt</div>
<div class="c" style="left:904.5px;top:225px;letter-spacing:0.104px">Adjustment Issue</div>
<div class="c" style="left:1024.8px;top:225px;letter-spacing:-0.171px">Closing Stock</div>
<div class="c" style="left:1118.0px;top:225px;letter-spacing:0.008px">Item Entered Date</div>
<div class="c" style="left:23px;top:246px">Drug</div>
<div class="c" style="left:120.7px;top:246px;letter-spacing:0.436px">MM9801</div>
<div class="c" style="left:219px;top:246px;width:101px;text-align:right">0</div>
<div class="c" style="left:325px;top:246px">01-06-2020</div>
<div class="c" style="left:406px;top:246px">0</div>
<div class="c" style="left:506px;top:246px">2160</div>
<div class="c" style="left:633px;top:246px">0</div>
<div class="c" style="left:770px;top:246px">0</div>
<div class="c" style="left:905px;top:246px">0</div>
<div class="c" style="left:1025px;top:246px">0</div>
<div class="c" style="left:1118px;top:246px">04-09-2019</div>
<div class="c" style="left:23px;top:267px">Drug</div>
<div class="c" style="left:120.7px;top:267px;letter-spacing:-0.929px">ICCLS003</div>
<div class="c" style="left:219px;top:267px;width:101px;text-align:right">0</div>
<div class="c" style="left:325px;top:267px">01-07-2020</div>
<div class="c" style="left:406px;top:267px">0</div>
<div class="c" style="left:506px;top:267px">300</div>
<div class="c" style="left:633px;top:267px">0</div>
<div class="c" style="left:770px;top:267px">0</div>
<div class="c" style="left:905px;top:267px">0</div>
<div class="c" style="left:1025px;top:267px">0</div>
<div class="c" style="left:1118px;top:267px">04-09-2019</div>
<div class="c" style="left:23px;top:288px">Drug</div>
<div class="c" style="left:120.7px;top:288px;letter-spacing:-0.226px">AP9011</div>
<div class="c" style="left:219px;top:288px;width:101px;text-align:right">0</div>
<div class="c" style="left:325px;top:288px">01-03-2022</div>
<div class="c" style="left:406px;top:288px">0</div>
<div class="c" style="left:506px;top:288px">4000</div>
<div class="c" style="left:633px;top:288px">0</div>
<div class="c" style="left:770px;top:288px">0</div>
<div class="c" style="left:905px;top:288px">0</div>
<div class="c" style="left:1025px;top:288px">0</div>
<div class="c" style="left:1118px;top:288px">04-09-2019</div>
<div class="c" style="left:23px;top:309px">Drug</div>
<div class="c" style="left:120.7px;top:309px;letter-spacing:-0.281px">AMX1803</div>
<div class="c" style="left:219px;top:309px;width:101px;text-align:right">0</div>
<div class="c" style="left:325px;top:309px">01-06-2020</div>
<div class="c" style="left:406px;top:309px">0</div>
<div class="c" style="left:506px;top:309px">400</div>
<div class="c" style="left:633px;top:309px">0</div>
<div class="c" style="left:770px;top:309px">0</div>
<div class="c" style="left:905px;top:309px">0</div>
<div class="c" style="left:1025px;top:309px">0</div>
<div class="c" style="left:1118px;top:309px">04-09-2019</div>
<div class="c" style="left:23px;top:330px">Drug</div>
<div class="c" style="left:120.7px;top:330px;letter-spacing:0.229px">WD2021118</div>
<div class="c" style="left:219px;top:330px;width:101px;text-align:right">0</div>
<div class="c" style="left:325px;top:330px">01-04-2020</div>
<div class="c" style="left:406px;top:330px">0</div>
<div class="c" style="left:506px;top:330px">20</div>
<div class="c" style="left:633px;top:330px">0</div>
<div class="c" style="left:770px;top:330px">0</div>
<div class="c" style="left:905px;top:330px">0</div>
<div class="c" style="left:1025px;top:330px">0</div>
<div class="c" style="left:1118px;top:330px">04-09-2019</div>
<div class="c" style="left:23px;top:351px">Drug</div>
<div class="c" style="left:120.7px;top:351px;letter-spacing:-0.561px">HAJA9205</div>
<div class="c" style="left:219px;top:351px;width:101px;text-align:right">0</div>
<div class="c" style="left:325px;top:351px">01-08-2020</div>
<div class="c" style="left:406px;top:351px">0</div>
<div class="c" style="left:506px;top:351px">1005</div>
<div class="c" style="left:633px;top:351px">0</div>
<div class="c" style="left:770px;top:351px">0</div>
<div class="c" style="left:905px;top:351px">0</div>
<div class="c" style="left:1025px;top:351px">0</div>
<div class="c" style="left:1118px;top:351px">04-09-2019</div>
<div class="c" style="left:23px;top:372px">Drug</div>
<div class="c" style="left:120.7px;top:372px;letter-spacing:0.065px">MOT19150</div>
<div class="c" style="left:219px;top:372px;width:101px;text-align:right">0</div>
<div class="c" style="left:325px;top:372px">01-04-2020</div>
<div class="c" style="left:406px;top:372px">0</div>
<div class="c" style="left:506px;top:372px">4004</div>
<div class="c" style="left:633px;top:372px">0</div>
<div class="c" style="left:770px;top:372px">0</div>
<div class="c" style="left:905px;top:372px">0</div>
<div class="c" style="left:1025px;top:372px">0</div>
<div class="c" style="left:1118px;top:372px">04-09-2019</div>
<div class="c" style="left:23px;top:393px">Drug</div>
<div class="c" style="left:120.7px;top:393px;letter-spacing:0.086px">AT145</div>
<div class="c" style="left:219px;top:393px;width:101px;text-align:right">0</div>
<div class="c" style="left:325px;top:393px">01-04-2020</div>
<div class="c" style="left:406px;top:393px">0</div>
<div class="c" style="left:506px;top:393px">30</div>
<div class="c" style="left:633px;top:393px">0</div>
<div class="c" style="left:770px;top:393px">0</div>
<div class="c" style="left:905px;top:393px">0</div>
<div class="c" style="left:1025px;top:393px">0</div>
<div class="c" style="left:1118px;top:393px">04-09-2019</div>
<div class="c" style="left:23px;top:414px">Drug</div>
<div class="c" style="left:120.7px;top:414px;letter-spacing:0.221px">2118067</div>
<div class="c" style="left:219px;top:414px;width:101px;text-align:right">0</div>
<div class="c" style="left:325px;top:414px">01-10-2021</div>
<div class="c" style="left:406px;top:414px">0</div>
<div class="c" style="left:506px;top:414px">30</div>
<div class="c" style="left:633px;top:414px">0</div>
<div class="c" style="left:770px;top:414px">0</div>
<div class="c" style="left:905px;top:414px">0</div>
<div class="c" style="left:1025px;top:414px">0</div>
<div class="c" style="left:1118px;top:414px">04-09-2019</div>
<div class="c" style="left:23px;top:435px">Drug</div>
<div class="c" style="left:120.7px;top:435px;letter-spacing:-0.178px">AD19001</div>
<div class="c" style="left:219px;top:435px;width:101px;text-align:right">0</div>
<div class="c" style="left:325px;top:435px">01-12-2020</div>
<div class="c" style="left:406px;top:435px">0</div>
<div class="c" style="left:506px;top:435px">100</div>
<div class="c" style="left:633px;top:435px">0</div>
<div class="c" style="left:770px;top:435px">0</div>
<div class="c" style="left:905px;top:435px">0</div>
<div class="c" style="left:1025px;top:435px">0</div>
<div class="c" style="left:1118px;top:435px">04-09-2019</div>
<div class="c" style="left:23px;top:456px">Drug</div>
<div class="c" style="left:120.7px;top:456px;letter-spacing:-0.225px">IG924</div>
<div class="c" style="left:219px;top:456px;width:101px;text-align:right">0</div>
<div class="c" style="left:325px;top:456px">01-02-2021</div>
<div class="c" style="left:406px;top:456px">0</div>
<div class="c" style="left:506px;top:456px">2010</div>
<div class="c" style="left:633px;top:456px">0</div>
<div class="c" style="left:770px;top:456px">0</div>
<div class="c" style="left:905px;top:456px">0</div>
<div class="c" style="left:1025px;top:456px">0</div>
<div class="c" style="left:1118px;top:456px">04-09-2019</div>
<div class="c" style="left:23px;top:477px">Drug</div>
<div class="c" style="left:120.7px;top:477px;letter-spacing:-0.360px">LHL2852</div>
<div class="c" style="left:219px;top:477px;width:101px;text-align:right">0</div>
<div class="c" style="left:325px;top:477px">01-02-2021</div>
<div class="c" style="left:406px;top:477px">0</div>
<div class="c" style="left:506px;top:477px">50</div>
<div class="c" style="left:633px;top:477px">0</div>
<div class="c" style="left:770px;top:477px">0</div>
<div class="c" style="left:905px;top:477px">0</div>
<div class="c" style="left:1025px;top:477px">0</div>
<div class="c" style="left:1118px;top:477px">04-09-2019</div>
<div class="c" style="left:23px;top:498px">Drug</div>
<div class="c" style="left:120.7px;top:498px;letter-spacing:-0.311px">CT1433A</div>
<div class="c" style="left:219px;top:498px;width:101px;text-align:right">0</div>
<div class="c" style="left:325px;top:498px">01-05-2021</div>
<div class="c" style="left:406px;top:498px">0</div>
<div class="c" style="left:506px;top:498px">200</div>
<div class="c" style="left:633px;top:498px">0</div>
<div class="c" style="left:770px;top:498px">0</div>
<div class="c" style="left:905px;top:498px">0</div>
<div class="c" style="left:1025px;top:498px">0</div>
<div class="c" style="left:1118px;top:498px">04-09-2019</div>
<div class="c" style="left:23px;top:519px">Drug</div>
<div class="c" style="left:120.7px;top:519px;letter-spacing:0.118px">T11424</div>
<div class="c" style="left:219px;top:519px;width:101px;text-align:right">0</div>
<div class="c" style="left:325px;top:519px">01-04-2021</div>
<div class="c" style="left:406px;top:519px">1500</div>
<div class="c" style="left:506px;top:519px">1500</div>
<div class="c" style="left:633px;top:519px">0</div>
<div class="c" style="left:770px;top:519px">0</div>
<div class="c" style="left:905px;top:519px">0</div>
<div class="c" style="left:1025px;top:519px">1500</div>
<div class="c" style="left:1118px;top:519px">04-09-2019</div>
<div class="c" style="left:23px;top:540px">Drug</div>
<div class="c" style="left:120.7px;top:540px;letter-spacing:0.345px">1810</div>
<div class="c" style="left:219px;top:540px;width:101px;text-align:right">0</div>
<div class="c" style="left:325px;top:540px">01-10-2020</div>
<div class="c" style="left:406px;top:540px">0</div>
<div class="c" style="left:506px;top:540px">2480</div>
<div class="c" style="left:633px;top:540px">0</div>
<div class="c" style="left:770px;top:540px">0</div>
<div class="c" style="left:905px;top:540px">0</div>
<div class="c" style="left:1025px;top:540px">0</div>
<div class="c" style="left:1118px;top:540px">04-09-2019</div>
<div class="c" style="left:23px;top:561px">Drug</div>
<div class="c" style="left:120.7px;top:561px;letter-spacing:-0.555px">ICCT003</div>
<div class="c" style="left:219px;top:561px;width:101px;text-align:right">0</div>
<div class="c" style="left:325px;top:561px">01-07-2021</div>
<div class="c" style="left:406px;top:561px">0</div>
<div class="c" style="left:506px;top:561px">700</div>
<div class="c" style="left:633px;top:561px">0</div>
<div class="c" style="left:770px;top:561px">0</div>
<div class="c" style="left:905px;top:561px">0</div>
<div class="c" style="left:1025px;top:561px">0</div>
<div class="c" style="left:1118px;top:561px">04-09-2019</div>
<div class="a" style="left:1331px;top:203px;width:11px;height:379px;background:#e6e6e6"></div>
<div class="a" style="left:1334px;top:236px;width:8px;height:346px;background:#dadada"></div>
<div class="a" style="left:1334px;top:205px;width:12px;height:15px;background:#fff;border:1px solid #ababab"></div>
<div class="a" style="left:1334px;top:220px;width:12px;height:17px;background:#fff;border:1px solid #ababab"></div>
<svg class="a" style="left:1334px;top:205px" width="8" height="15"><path d="M3.800 9.200L8 5V9.200Z" fill="#777"/></svg>
</div></body></html>
